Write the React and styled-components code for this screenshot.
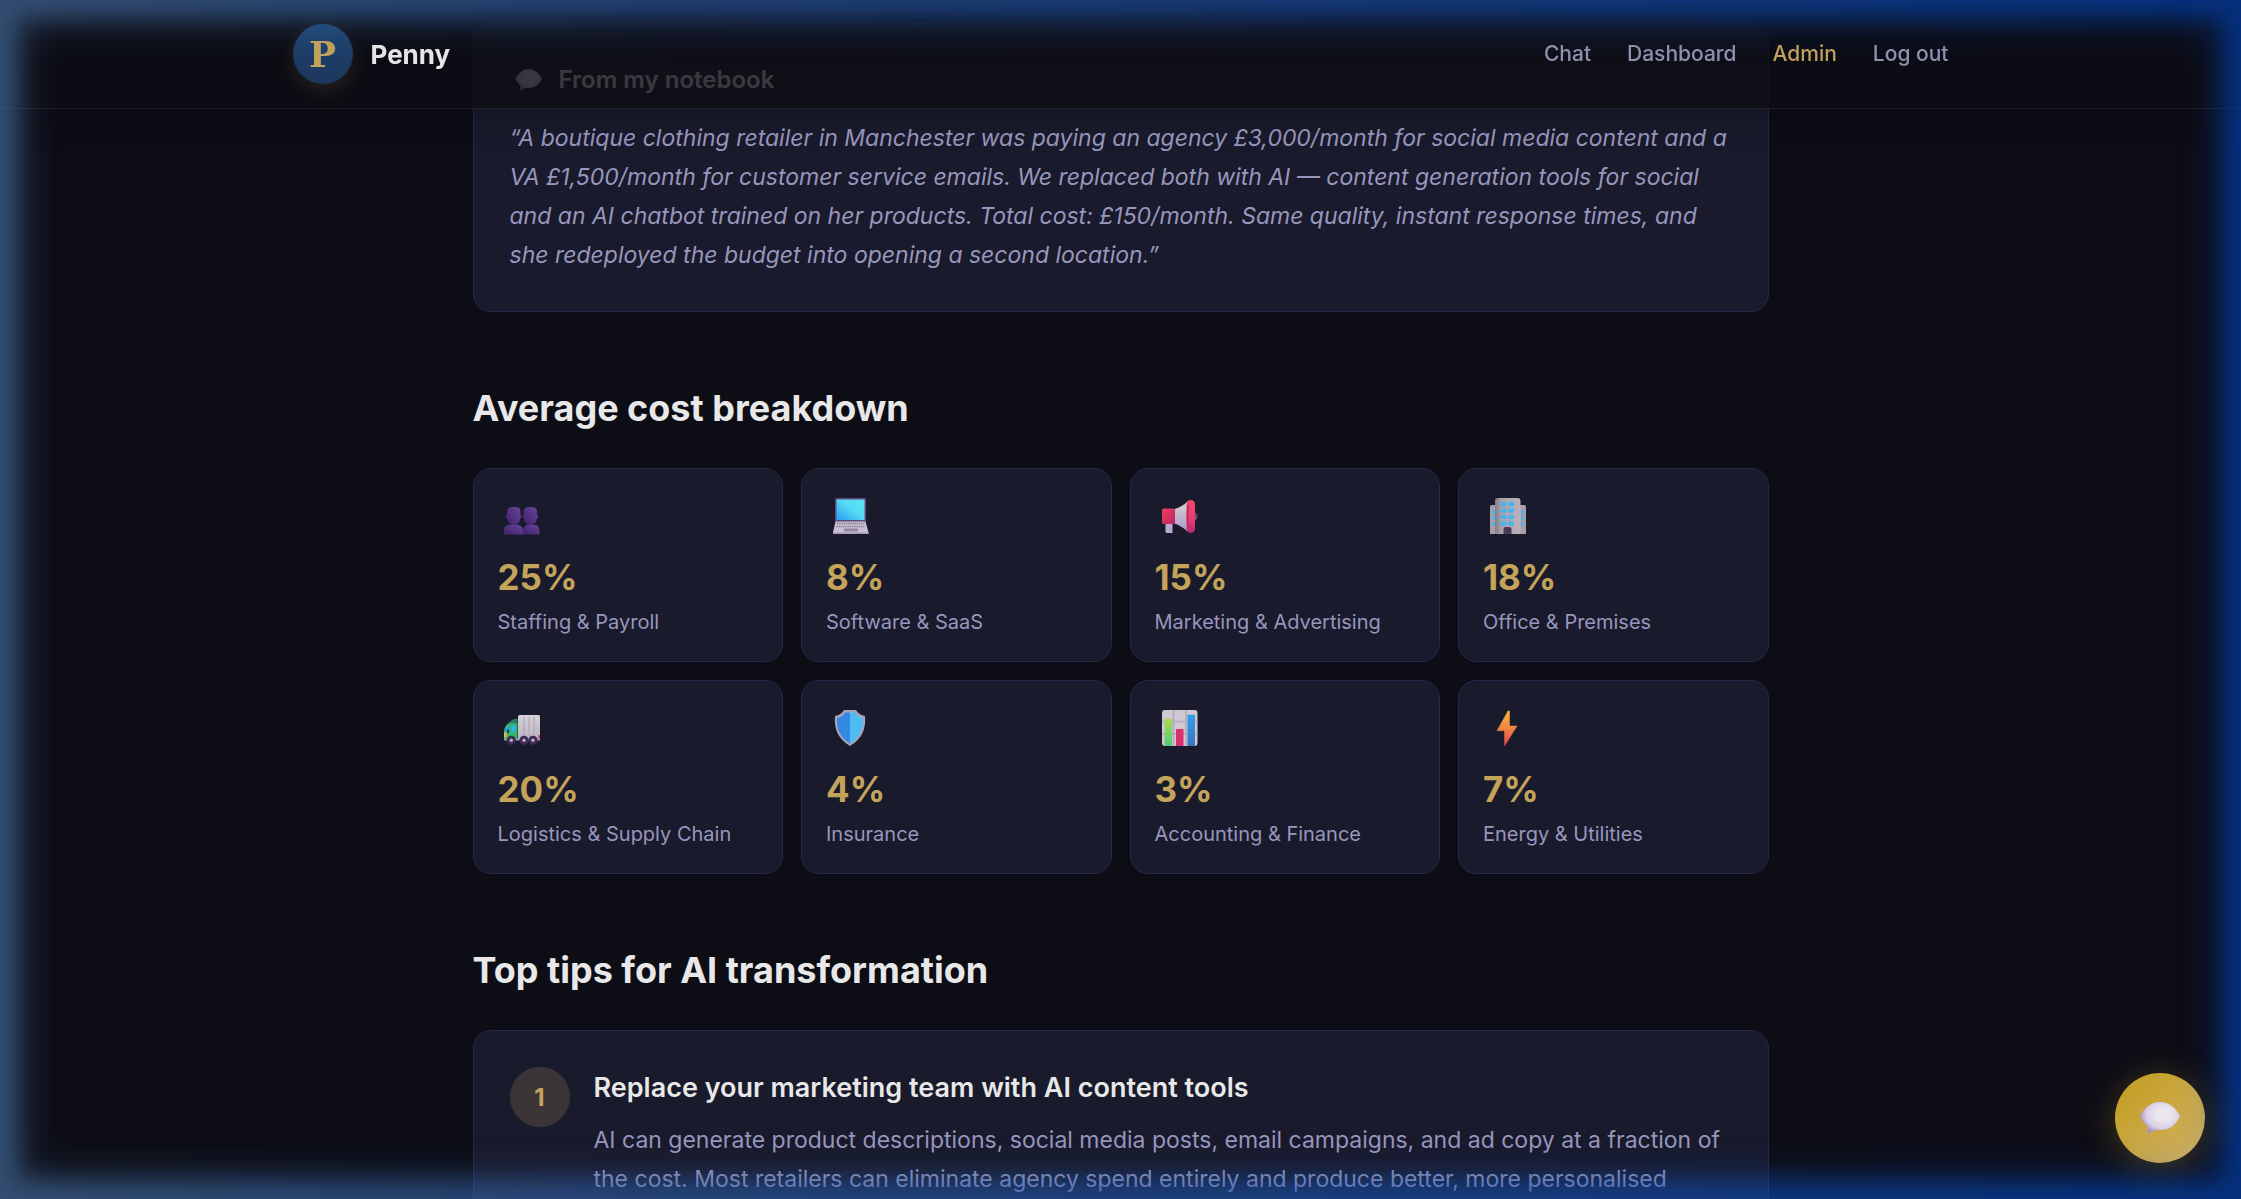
import styled, { createGlobalStyle } from 'styled-components';

const GlobalStyle = createGlobalStyle`
  *, *::before, *::after {
    box-sizing: border-box;
  }

  body {
    margin: 0;
    background-color: #0d0d16;
    color: #e8e8e8;
    font-family: Inter, 'Open Sans', 'Liberation Sans', sans-serif;
  }

  h2, h3, p {
    margin: 0;
  }
`;

const Header = styled.header`
  position: fixed;
  top: 0;
  left: 0;
  right: 0;
  z-index: 10;
  background-color: rgba(13, 13, 20, 0.8);
  border-bottom: 1px solid rgba(255, 255, 255, 0.07);
  box-shadow: 0 6px 36px rgba(0, 0, 0, 0.2);
`;

const HeaderInner = styled.div`
  display: flex;
  align-items: center;
  justify-content: space-between;
  max-width: 1728px;
  margin: 0 auto;
  padding: 24px 36px;
`;

const Brand = styled.a`
  display: flex;
  align-items: center;
  gap: 18px;
  color: #e8e8e8;
  font-size: 26px;
  font-weight: 700;
  text-decoration: none;
`;

const Logo = styled.span`
  display: flex;
  align-items: center;
  justify-content: center;
  width: 60px;
  height: 60px;
  border-radius: 50%;
  background: linear-gradient(180deg, #1f4470, #1c365c);
  box-shadow: 0 6px 20px rgba(196, 163, 90, 0.15);
  color: #c4a35a;
  font-family: 'DejaVu Serif', serif;
  font-size: 36px;
  font-weight: 700;
`;

const Nav = styled.nav`
  display: flex;
  align-items: center;
  gap: 36px;
`;

const NavLink = styled.a`
  color: ${(props) => (props.$active ? '#c4a35a' : '#9392b0')};
  font-size: 21px;
  font-weight: 500;
  line-height: 30px;
  text-decoration: none;
`;

const NavButton = styled.button`
  padding: 0;
  border: none;
  background: none;
  color: #9392b0;
  font-family: inherit;
  font-size: 21px;
  font-weight: 500;
  line-height: 30px;
  cursor: pointer;
`;

const Main = styled.main`
  display: flex;
  flex-direction: column;
  gap: 72px;
  max-width: 1344px;
  margin: 0 auto;
  padding: 22px 24px 0;
`;

const Section = styled.section`
  display: flex;
  flex-direction: column;
  gap: 36px;
`;

const SectionTitle = styled.h2`
  font-size: 36px;
  font-weight: 700;
  line-height: 48px;
`;

const Card = styled.div`
  padding: ${(props) => props.$padding};
  border: 1px solid #28264a;
  border-radius: 18px;
  background-color: #191a2b;
`;

const NoteTitle = styled.h3`
  display: flex;
  align-items: center;
  gap: 12px;
  margin-bottom: 18px;
  font-size: 24px;
  font-weight: 600;
  line-height: 42px;
`;

const Body = styled.p`
  color: #9896bd;
  font-size: 23px;
  line-height: 39px;
`;

const Quote = styled(Body)`
  font-style: italic;
`;

const CostGrid = styled.div`
  display: grid;
  grid-template-columns: repeat(4, 1fr);
  gap: 18px;
`;

const CostIcon = styled.svg`
  display: block;
  width: 48px;
  height: 48px;
  margin-bottom: 12px;
`;

const CostValue = styled.p`
  margin-bottom: 6px;
  color: #c4a35a;
  font-size: 35px;
  font-weight: 700;
  line-height: 48px;
`;

const CostLabel = styled.p`
  color: #9896bd;
  font-size: 20px;
  line-height: 30px;
`;

const Tip = styled.div`
  display: flex;
  align-items: flex-start;
  gap: 24px;
`;

const TipNumber = styled.span`
  display: flex;
  flex-shrink: 0;
  align-items: center;
  justify-content: center;
  width: 60px;
  height: 60px;
  border-radius: 50%;
  background-color: #3b3537;
  color: #c4a35a;
  font-size: 24px;
  font-weight: 700;
`;

const TipTitle = styled.h3`
  margin-bottom: 12px;
  font-size: 27px;
  font-weight: 600;
  line-height: 42px;
`;

const ChatButton = styled.button`
  position: fixed;
  right: 36px;
  bottom: 36px;
  z-index: 10;
  display: flex;
  align-items: center;
  justify-content: center;
  width: 90px;
  height: 90px;
  padding: 0;
  border: none;
  border-radius: 50%;
  background: linear-gradient(135deg, #c5a028 15%, #d0b060 90%);
  box-shadow: 0 6px 36px rgba(197, 160, 40, 0.3);
  cursor: pointer;
`;

// soft blue light around the window edges
const fade =
  '#000 0, rgba(0, 0, 0, 0.85) 10px, rgba(0, 0, 0, 0.55) 20px, rgba(0, 0, 0, 0.26) 30px, rgba(0, 0, 0, 0.1) 40px, rgba(0, 0, 0, 0.03) 52px, transparent 68px';

const EdgeGlow = styled.div`
  position: fixed;
  inset: 0;
  z-index: 20;
  pointer-events: none;
  opacity: 0.6;
  background: linear-gradient(90deg, #4b78ac, #2c5fab 30%, #0147c0);
  mask-image: linear-gradient(to right, ${fade}), linear-gradient(to left, ${fade}),
    linear-gradient(to bottom, ${fade}), linear-gradient(to top, ${fade});
`;

const Bubble = ({ width, height }) => (
  <svg width={width} height={height} viewBox="0 0 48 48" aria-hidden="true">
    <defs>
      <radialGradient id="bubble" cx="0.58" cy="0.4" r="0.6">
        <stop offset="0.3" stopColor="#eae8ee" />
        <stop offset="0.7" stopColor="#dccfe6" />
        <stop offset="1" stopColor="#a48fc8" />
      </radialGradient>
    </defs>
    <path
      fill="url(#bubble)"
      d="M4 22.500Q11 8 24 8Q37 8 44 22.500Q37 36 25 36L19.500 36Q15 38 12.500 40Q11.300 40 11.800 32.500Q7 28.500 4 22.500Z"
    />
  </svg>
);

const PeopleIcon = () => (
  <CostIcon viewBox="0 0 48 48" aria-hidden="true">
    <defs>
      <linearGradient id="people" x1="0" y1="1" x2="1" y2="0">
        <stop offset="0" stopColor="#3d2168" />
        <stop offset="1" stopColor="#6a449c" />
      </linearGradient>
    </defs>
    <g fill="url(#people)">
      <path d="M6 41.500V38Q6 31.500 13 31.500H18Q25 31.500 25 38V41.500Z" />
      <path d="M25 41.500V38Q25 31.500 31 31.500H35Q41.500 31.500 41.500 38V41.500Z" />
      <circle cx="9" cy="23.500" r="1.500" />
      <circle cx="22" cy="23.500" r="1.500" />
      <circle cx="26" cy="23.500" r="1.500" />
      <circle cx="39" cy="23.500" r="1.500" />
      <path d="M9 19Q9 14 14 14H18Q22.500 14 22.500 19V25Q21.500 32 15.500 32Q10 32 9 25Z" />
      <path d="M25.500 19Q25.500 14 30.500 14H34Q39 14 39 19V25Q38 32 32.500 32Q26.500 32 25.500 25Z" />
    </g>
  </CostIcon>
);

const LaptopIcon = () => (
  <CostIcon viewBox="0 0 48 48" aria-hidden="true">
    <defs>
      <linearGradient id="screen" x1="0" y1="1" x2="1" y2="0">
        <stop offset="0" stopColor="#279cf0" />
        <stop offset="0.55" stopColor="#55daf4" />
        <stop offset="1" stopColor="#5ae4f2" />
      </linearGradient>
    </defs>
    <rect x="9" y="5" width="31" height="24.500" rx="1.500" fill="#5e4a80" />
    <rect x="10.500" y="6.500" width="28" height="20.500" fill="url(#screen)" />
    <path d="M9.500 28.500H39.500L42.500 39.500V41H7V39.500Z" fill="#c9c1d3" />
    <path d="M7 39.500H42.500V41H7Z" fill="#a79bb5" />
    <path d="M11 30.500H38.500M10.500 33.500H39" stroke="#8a8096" strokeWidth="1.500" strokeDasharray="1.500 0.700" />
    <rect x="18" y="35.500" width="14" height="3" rx="0.500" fill="#92899f" />
  </CostIcon>
);

const MegaphoneIcon = () => (
  <CostIcon viewBox="0 0 48 48" aria-hidden="true">
    <defs>
      <linearGradient id="horn" x1="0" y1="0" x2="1" y2="1">
        <stop offset="0" stopColor="#f23f5b" />
        <stop offset="1" stopColor="#b32568" />
      </linearGradient>
      <linearGradient id="cone" x1="0" y1="0" x2="0" y2="1">
        <stop offset="0.2" stopColor="#cdc9cc" />
        <stop offset="1" stopColor="#a996cf" />
      </linearGradient>
      <linearGradient id="rim" x1="0" y1="0" x2="0" y2="1">
        <stop offset="0" stopColor="#f4486f" />
        <stop offset="0.6" stopColor="#e73b72" />
        <stop offset="1" stopColor="#b3286c" />
      </linearGradient>
    </defs>
    <circle cx="38.500" cy="23.500" r="4" fill="#5c5166" />
    <path d="M10.500 30H17.500V40H12Q10.500 40 10.500 38.500Z" fill="#b9abd0" />
    <path d="M19.500 16Q27 14 33 8V39Q27 33 19.500 30.500Z" fill="url(#cone)" />
    <rect x="7" y="15.500" width="13" height="15.500" rx="1.500" fill="url(#horn)" />
    <rect x="31.500" y="7" width="8.500" height="33" rx="4.200" fill="url(#rim)" />
    <path d="M33.500 12Q31.500 23 33.500 35" stroke="#c92b62" strokeWidth="2" fill="none" />
  </CostIcon>
);

const OfficeIcon = () => (
  <CostIcon viewBox="0 0 48 48" aria-hidden="true">
    <defs>
      <linearGradient id="tower" x1="0" y1="0" x2="1" y2="0">
        <stop offset="0" stopColor="#857d88" />
        <stop offset="0.25" stopColor="#aaa1ac" />
        <stop offset="1" stopColor="#b9b1bb" />
      </linearGradient>
    </defs>
    <path d="M7 41V14Q7 12 9 12H41Q43 12 43 14V41Z" fill="#a69ea9" />
    <path d="M12 41V8Q12 5 15 5H34.500Q37.500 5 37.500 8V41Z" fill="url(#tower)" />
    <g fill="#40b8ef">
      {[9, 15.5, 22, 28.5].map((y) => (
        <g key={y}>
          <rect x="18" y={y} width="5.500" height="4" />
          <rect x="25.500" y={y} width="5.500" height="4" />
        </g>
      ))}
      {[17, 23, 29].map((y) => (
        <g key={y}>
          <rect x="9.500" y={y} width="2.500" height="4" />
          <rect x="38" y={y} width="2.200" height="4" />
        </g>
      ))}
    </g>
    <path d="M20.500 41V36Q20.500 34 22.500 34H26.500Q28.500 34 28.500 36V41Z" fill="#4a3a55" />
  </CostIcon>
);

const TruckIcon = () => (
  <CostIcon viewBox="0 0 48 48" aria-hidden="true">
    <defs>
      <linearGradient id="cargo" x1="0" y1="0" x2="0" y2="1">
        <stop offset="0" stopColor="#d6d2d8" />
        <stop offset="1" stopColor="#bdb2c2" />
      </linearGradient>
    </defs>
    <rect x="6" y="33" width="36" height="2.500" fill="#aaa0b2" />
    <path d="M10 19Q13 14 19.500 13.500V19Z" fill="#2f7f66" />
    <path d="M10 18.500H19.500V34H6V27Q6 22 10 18.500Z" fill="#36b56c" />
    <path d="M7 26Q8 21 11.500 20.500V24.500L8 29Z" fill="#28a5e8" />
    <path d="M13.500 20.500H17.500V26L13.500 28Z" fill="#2fb5e5" />
    <path d="M9 24.500H11V28H9Z" fill="#21345d" />
    <rect x="6" y="27.500" width="2.500" height="5" fill="#f1b63c" />
    <rect x="20" y="10" width="22" height="24" rx="1.500" fill="url(#cargo)" />
    <path d="M26 12V33M31 12V33M36 12V33" stroke="#aaa1ae" strokeWidth="1" />
    <rect x="40.500" y="30" width="1.500" height="3.500" fill="#d22f63" />
    {[13.3, 26, 35].map((x) => (
      <g key={x}>
        <circle cx={x} cy="35.300" r="4.600" fill="#402d55" />
        <circle cx={x} cy="35.300" r="1.700" fill="#b7abc1" />
      </g>
    ))}
  </CostIcon>
);

const ShieldIcon = () => (
  <CostIcon viewBox="0 0 48 48" aria-hidden="true">
    <path
      d="M18 5H30Q33 10 39 11Q41 31 24 41Q7 31 9 11Q15 10 18 5Z"
      fill="#a8a3b8"
    />
    <path d="M19 7.500H24V38.500Q10 30 11 13Q16.500 12 19 7.500Z" fill="#3489e4" />
    <path d="M29 7.500H24V38.500Q38 30 37 13Q31.500 12 29 7.500Z" fill="#4dbcf4" />
  </CostIcon>
);

const ChartIcon = () => (
  <CostIcon viewBox="0 0 48 48" aria-hidden="true">
    <defs>
      <linearGradient id="green" x1="0" y1="0" x2="0" y2="1">
        <stop offset="0" stopColor="#a9dc4a" />
        <stop offset="1" stopColor="#54c981" />
      </linearGradient>
      <linearGradient id="blue" x1="0" y1="0" x2="0" y2="1">
        <stop offset="0" stopColor="#2ea0ea" />
        <stop offset="1" stopColor="#3b74c4" />
      </linearGradient>
    </defs>
    <rect x="7" y="5" width="35.500" height="36" rx="3" fill="#cfc9d4" />
    <path d="M18.500 5V41M31 5V41M7 16.500H42.500M7 29H42.500" stroke="#b1a9ba" strokeWidth="1.500" />
    <rect x="9.500" y="14" width="7.500" height="27" rx="0.500" fill="url(#green)" />
    <rect x="21" y="24" width="7.500" height="17" rx="0.500" fill="#dc2f70" />
    <rect x="32.500" y="9.700" width="7.500" height="31.300" rx="0.500" fill="url(#blue)" />
  </CostIcon>
);

const BoltIcon = () => (
  <CostIcon viewBox="0 0 48 48" aria-hidden="true">
    <defs>
      <linearGradient id="bolt" x1="0" y1="0" x2="0" y2="1">
        <stop offset="0" stopColor="#f3b83f" />
        <stop offset="0.5" stopColor="#f08440" />
        <stop offset="1" stopColor="#e23f58" />
      </linearGradient>
    </defs>
    <path
      d="M26.500 6L26.500 21H34L21.500 41V25.700H14L25 6Z"
      fill="url(#bolt)"
      stroke="url(#bolt)"
      strokeWidth="0.500"
      strokeLinejoin="round"
    />
  </CostIcon>
);

const costs = [
  { Icon: PeopleIcon, value: '25%', label: 'Staffing & Payroll' },
  { Icon: LaptopIcon, value: '8%', label: 'Software & SaaS' },
  { Icon: MegaphoneIcon, value: '15%', label: 'Marketing & Advertising' },
  { Icon: OfficeIcon, value: '18%', label: 'Office & Premises' },
  { Icon: TruckIcon, value: '20%', label: 'Logistics & Supply Chain' },
  { Icon: ShieldIcon, value: '4%', label: 'Insurance' },
  { Icon: ChartIcon, value: '3%', label: 'Accounting & Finance' },
  { Icon: BoltIcon, value: '7%', label: 'Energy & Utilities' },
];

const tips = [
  {
    title: 'Replace your marketing team with AI content tools',
    text: 'AI can generate product descriptions, social media posts, email campaigns, and ad copy at a fraction of the cost. Most retailers can eliminate agency spend entirely and produce better, more personalised',
  },
];

function App() {
  return (
    <>
      <GlobalStyle />
      <Header>
        <HeaderInner>
          <Brand href="#home">
            <Logo>P</Logo>
            Penny
          </Brand>
          <Nav>
            <NavLink href="#chat">Chat</NavLink>
            <NavLink href="#dashboard">Dashboard</NavLink>
            <NavLink href="#admin" $active>
              Admin
            </NavLink>
            <NavButton type="button">Log out</NavButton>
          </Nav>
        </HeaderInner>
      </Header>

      <Main>
        <Card $padding="36px">
          <NoteTitle>
            <Bubble width={37} height={32} />
            From my notebook
          </NoteTitle>
          <Quote>
            “A boutique clothing retailer in Manchester was paying an agency £3,000/month for social
            media content and a VA £1,500/month for customer service emails. We replaced both with
            AI — content generation tools for social and an AI chatbot trained on her products.
            Total cost: £150/month. Same quality, instant response times, and she redeployed the
            budget into opening a second location.”
          </Quote>
        </Card>

        <Section>
          <SectionTitle>Average cost breakdown</SectionTitle>
          <CostGrid>
            {costs.map(({ Icon, value, label }) => (
              <Card key={label} $padding="24px">
                <Icon />
                <CostValue>{value}</CostValue>
                <CostLabel>{label}</CostLabel>
              </Card>
            ))}
          </CostGrid>
        </Section>

        <Section>
          <SectionTitle>Top tips for AI transformation</SectionTitle>
          {tips.map((tip, index) => (
            <Card key={tip.title} $padding="36px">
              <Tip>
                <TipNumber>{index + 1}</TipNumber>
                <div>
                  <TipTitle>{tip.title}</TipTitle>
                  <Body>{tip.text}</Body>
                </div>
              </Tip>
            </Card>
          ))}
        </Section>
      </Main>

      <ChatButton type="button" aria-label="Chat with Penny">
        <Bubble width={48} height={48} />
      </ChatButton>
      <EdgeGlow />
    </>
  );
}

export default App;
